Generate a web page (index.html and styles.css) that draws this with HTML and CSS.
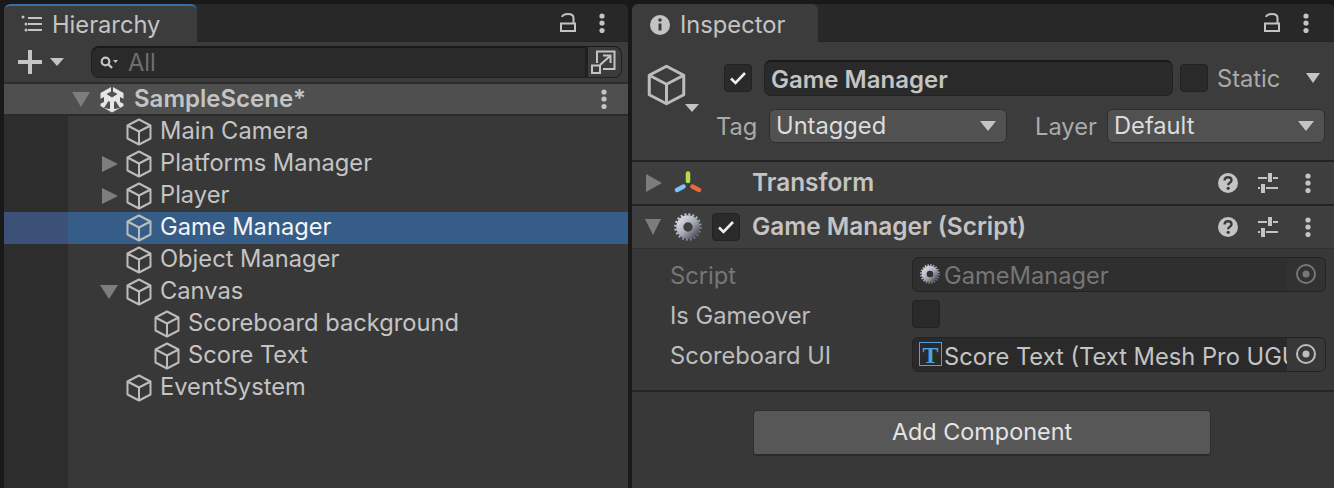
FILE: index.html
```html
<!DOCTYPE html>
<html>
<head>
    <title>Unity Editor</title>
    <meta http-equiv="Content-Type" content="text/html; charset=utf-8"/>
    <link rel="stylesheet" href="styles.css">
</head>
<body>
<svg class="defs" width="0" height="0">
    <symbol id="cube" viewBox="0 0 26 28">
        <path d="M13 1.500 24.500 7.500V20.500L13 26.500 1.500 20.500V7.500ZM1.500 7.500 13 13.500 24.500 7.500M13 13.500V26.500" fill="none" stroke="currentColor" stroke-width="2" stroke-linejoin="round"/>
    </symbol>
    <symbol id="dots" viewBox="0 0 6 20">
        <circle cx="3" cy="3" r="2.600" fill="currentColor"/><circle cx="3" cy="10" r="2.600" fill="currentColor"/><circle cx="3" cy="17.500" r="2.600" fill="currentColor"/>
    </symbol>
    <symbol id="lock" viewBox="0 0 16 19">
        <path d="M1 10.500H15V18H1ZM2 4Q3 1 8 1 13.500 1 13.500 5V10" fill="none" stroke="currentColor" stroke-width="2"/>
    </symbol>
    <symbol id="help" viewBox="0 0 20 20">
        <circle cx="10" cy="10" r="10" fill="#c4c4c4"/>
        <path d="M6.500 7.500Q6.800 4.300 10 4.300 13.500 4.300 13.500 7.200 13.500 8.700 11.800 9.700 10.200 10.600 10.200 12.200" fill="none" stroke="#3c3c3c" stroke-width="2.400"/>
        <circle cx="10.200" cy="15.300" r="1.600" fill="#3c3c3c"/>
    </symbol>
    <symbol id="sliders" viewBox="0 0 20 20">
        <path d="M0 5H9M15 5H20M0 15H2M8 15H20" stroke="#c4c4c4" stroke-width="2" fill="none"/>
        <path d="M12 0V9M5 11V20" stroke="#c4c4c4" stroke-width="4" fill="none"/>
    </symbol>
    <symbol id="target" viewBox="0 0 20 20">
        <circle cx="10" cy="10" r="9" fill="none" stroke="currentColor" stroke-width="2"/><circle cx="10" cy="10" r="3.500" fill="currentColor"/>
    </symbol>
    <symbol id="gear" viewBox="0 0 30 30">
        <circle cx="15" cy="15" r="8.750" fill="none" stroke="url(#gearfill)" stroke-width="7.500"/>
        <circle cx="15" cy="15" r="13.500" fill="none" stroke="url(#gearfill)" stroke-width="2.500" stroke-dasharray="2.120 2.120"/>
    </symbol>
    <linearGradient id="gearfill" x1="0" y1="0" x2="1" y2="1">
        <stop offset="0" stop-color="#d8dbe2"/><stop offset="0.55" stop-color="#a4a8b4"/><stop offset="1" stop-color="#50545f"/>
    </linearGradient>
</svg>

<div class="editor">
    <div class="panel hierarchy">
        <div class="tabbar">
            <div class="tab tab-active">
                <svg class="tab-icon" width="22" height="18" viewBox="0 0 22 18"><path d="M7 3H21M7 9H21M7 15H21" stroke="#c4c4c4" stroke-width="2"/><circle cx="2" cy="2" r="1.500" fill="#c4c4c4"/><circle cx="5" cy="9" r="1.500" fill="#c4c4c4"/><circle cx="5" cy="15" r="1.500" fill="#c4c4c4"/></svg>
                <span>Hierarchy</span>
            </div>
            <div class="tab-tools">
                <svg class="lock"><use href="#lock"/></svg>
                <svg class="dots"><use href="#dots"/></svg>
            </div>
        </div>
        <div class="toolbar">
            <svg class="plus" width="24" height="24" viewBox="0 0 24 24"><path d="M12 0V24M0 12H24" stroke="#c4c4c4" stroke-width="4"/></svg>
            <i class="arrow-down small"></i>
            <div class="search">
                <svg class="search-icon" width="18" height="14" viewBox="0 0 18 14"><circle cx="5.500" cy="5.500" r="3.800" fill="none" stroke="#c4c4c4" stroke-width="2.200"/><path d="M8 8 12 12" stroke="#c4c4c4" stroke-width="2.400"/><path d="M13 4H18L15.500 7Z" fill="#c4c4c4"/></svg>
                <span class="search-text">All</span>
                <div class="search-btn">
                    <svg width="28" height="24" viewBox="0 0 28 24"><path d="M6 13V1.500H23.500V19H12" fill="none" stroke="#c4c4c4" stroke-width="2"/><path d="M1 15.500H9V23H1Z" fill="none" stroke="#c4c4c4" stroke-width="2"/><path d="M9 15 19 6M12 5.500H19.500V13" fill="none" stroke="#c4c4c4" stroke-width="2"/></svg>
                </div>
            </div>
        </div>
        <div class="scene">
            <i class="arrow-down scene-arrow"></i>
            <svg class="scene-icon" width="24" height="27" viewBox="0 0 24 27">
                <path d="M12 0.500 23.500 7V20L12 26.500 0.500 20V7Z" fill="#e6e6e6"/>
                <path d="M12 0V6" stroke="#505050" stroke-width="2"/>
                <path d="M6.500 8 12 5 17.500 8 12 11.500Z" fill="#505050"/>
                <path d="M4 22 8.500 15 10 16V23ZM20 22 15.500 15 14 16V23Z" fill="#505050"/>
                <path d="M0 13 4 11V16L0 18ZM24 13 20 11V16L24 18Z" fill="#505050"/>
            </svg>
            <span class="scene-name">SampleScene*</span>
            <svg class="dots scene-dots"><use href="#dots"/></svg>
        </div>
        <div class="tree">
            <div class="row"><i class="slot"></i><svg class="cube"><use href="#cube"/></svg><span>Main Camera</span></div>
            <div class="row"><i class="slot"><b class="fold-right"></b></i><svg class="cube"><use href="#cube"/></svg><span>Platforms Manager</span></div>
            <div class="row"><i class="slot"><b class="fold-right"></b></i><svg class="cube"><use href="#cube"/></svg><span>Player</span></div>
            <div class="row selected"><i class="slot"></i><svg class="cube"><use href="#cube"/></svg><span>Game Manager</span></div>
            <div class="row"><i class="slot"></i><svg class="cube"><use href="#cube"/></svg><span>Object Manager</span></div>
            <div class="row"><i class="slot"><b class="fold-down"></b></i><svg class="cube"><use href="#cube"/></svg><span>Canvas</span></div>
            <div class="row child"><i class="slot"></i><svg class="cube"><use href="#cube"/></svg><span>Scoreboard background</span></div>
            <div class="row child"><i class="slot"></i><svg class="cube"><use href="#cube"/></svg><span>Score Text</span></div>
            <div class="row"><i class="slot"></i><svg class="cube"><use href="#cube"/></svg><span>EventSystem</span></div>
        </div>
    </div>

    <div class="panel inspector">
        <div class="tabbar">
            <div class="tab tab-inspector">
                <svg class="tab-icon" width="20" height="20" viewBox="0 0 20 20"><circle cx="10" cy="10" r="10" fill="#c4c4c4"/><path d="M10 8.500V15.500" stroke="#3c3c3c" stroke-width="3"/><circle cx="10" cy="5" r="1.800" fill="#3c3c3c"/></svg>
                <span>Inspector</span>
            </div>
            <div class="tab-tools">
                <svg class="lock"><use href="#lock"/></svg>
                <svg class="dots"><use href="#dots"/></svg>
            </div>
        </div>

        <div class="go-header">
            <div class="go-icon">
                <svg class="go-cube"><use href="#cube"/></svg>
                <i class="arrow-down tiny"></i>
            </div>
            <div class="go-fields">
                <div class="go-line">
                    <div class="check on"><svg width="18" height="14" viewBox="0 0 18 14"><path d="M2 7.500 6.500 12 16 2" fill="none" stroke="#eee" stroke-width="2.600"/></svg></div>
                    <div class="name-field">Game Manager</div>
                    <div class="check"></div>
                    <span class="static-label">Static</span>
                    <i class="arrow-down static-arrow"></i>
                </div>
                <div class="go-line second">
                    <span class="tag-label">Tag</span>
                    <div class="dropdown tag-drop"><span>Untagged</span><i class="arrow-down"></i></div>
                    <span class="layer-label">Layer</span>
                    <div class="dropdown layer-drop"><span>Default</span><i class="arrow-down"></i></div>
                </div>
            </div>
        </div>

        <div class="comp-head">
            <b class="fold-right comp-fold"></b>
            <svg class="axis" width="28" height="24" viewBox="0 0 28 24">
                <path d="M14 2.500V10" stroke="#b0e04a" stroke-width="4.500" stroke-linecap="round"/>
                <path d="M9.500 15.500 3 19" stroke="#7cc4f5" stroke-width="4.500" stroke-linecap="round"/>
                <path d="M18.500 15.500 25 19" stroke="#e8693a" stroke-width="4.500" stroke-linecap="round"/>
            </svg>
            <span class="comp-title">Transform</span>
            <div class="comp-tools">
                <svg><use href="#help"/></svg>
                <svg><use href="#sliders"/></svg>
                <svg class="dots"><use href="#dots"/></svg>
            </div>
        </div>

        <div class="comp-head second-comp">
            <b class="fold-down comp-fold"></b>
            <svg class="gear" width="28" height="28"><use href="#gear"/></svg>
            <div class="check on comp-check"><svg width="18" height="14" viewBox="0 0 18 14"><path d="M2 7.500 6.500 12 16 2" fill="none" stroke="#eee" stroke-width="2.600"/></svg></div>
            <span class="comp-title">Game Manager (Script)</span>
            <div class="comp-tools">
                <svg><use href="#help"/></svg>
                <svg><use href="#sliders"/></svg>
                <svg class="dots"><use href="#dots"/></svg>
            </div>
        </div>

        <div class="props">
            <div class="prop disabled">
                <span class="prop-label">Script</span>
                <div class="obj-field">
                    <svg class="gear-small" width="20" height="20"><use href="#gear"/></svg>
                    <span class="obj-text">GameManager</span>
                    <div class="obj-pick"><svg width="20" height="20"><use href="#target"/></svg></div>
                </div>
            </div>
            <div class="prop">
                <span class="prop-label">Is Gameover</span>
                <div class="check"></div>
            </div>
            <div class="prop">
                <span class="prop-label">Scoreboard UI</span>
                <div class="obj-field">
                    <div class="tmp-icon">T</div>
                    <span class="obj-text">Score Text (Text Mesh Pro UGUI)</span>
                    <div class="obj-pick"><svg width="20" height="20"><use href="#target"/></svg></div>
                </div>
            </div>
        </div>

        <div class="add-area">
            <div class="add-btn">Add Component</div>
        </div>
    </div>
</div>
</body>
</html>
```

FILE: styles.css
```css
html, body {
    margin: 0;
    padding: 0;
    height: 488px;
    overflow: hidden;
    background-color: #191919;
    font-family: Inter, "Liberation Sans", sans-serif;
    font-size: 23.7px;
    color: #c4c4c4;
}

.defs {
    position: absolute;
}

.editor {
    display: flex;
    gap: 4px;
    height: 484px;
    padding: 4px 0 0 4px;
}

.panel {
    display: flex;
    flex-direction: column;
    border-radius: 6px 6px 0 0;
    background-color: #383838;
    overflow: hidden;
}

.hierarchy {
    width: 624px;
}

.inspector {
    width: 702px;
}

/**** TABS ****/

.tabbar {
    display: flex;
    height: 38px;
    background-color: #282828;
    border-bottom: 1px solid #232323;
    box-sizing: border-box;
    flex: none;
}

.tab {
    display: flex;
    align-items: center;
    height: 38px;
    background-color: #3c3c3c;
    border-radius: 6px 6px 0 0;
    box-sizing: border-box;
}

.tab-active {
    width: 193px;
    border-top: 2px solid #3a6ea5;
    padding-left: 17px;
    gap: 9px;
}

.tab-inspector {
    width: 186px;
    padding-left: 18px;
    padding-top: 3px;
    gap: 10px;
}

.tab-icon {
    flex: none;
}

.tab-tools {
    display: flex;
    align-items: center;
    gap: 23px;
    margin-left: auto;
    padding-right: 23px;
    height: 37px;
}

.inspector .tab-tools {
    padding-right: 25px;
}

.lock {
    width: 16px;
    height: 19px;
    color: #c4c4c4;
}

.dots {
    width: 6px;
    height: 20px;
    color: #c4c4c4;
}

/**** HIERARCHY ****/

.toolbar {
    display: flex;
    align-items: center;
    height: 42px;
    background-color: #3c3c3c;
    border-bottom: 2px solid #2c2c2c;
    padding-left: 14px;
    box-sizing: border-box;
    flex: none;
}

.arrow-down {
    display: block;
    width: 0;
    height: 0;
    border-left: 8px solid transparent;
    border-right: 8px solid transparent;
    border-top: 10px solid #c4c4c4;
    flex: none;
}

.arrow-down.small {
    margin: 0 0 0 8px;
    border-left-width: 7px;
    border-right-width: 7px;
    border-top-width: 8px;
}

.search {
    display: flex;
    align-items: center;
    flex: 1;
    height: 32px;
    margin: 0 6px 0 27px;
    background-color: #2a2a2a;
    border: 1px solid #212121;
    border-top: 2px solid #191919;
    border-radius: 8px;
    box-sizing: border-box;
    padding-left: 8px;
}

.search-text {
    margin-left: 10px;
    color: #6f6f6f;
}

.search-btn {
    display: flex;
    align-items: center;
    justify-content: center;
    margin-left: auto;
    width: 36px;
    height: 30px;
    margin-top: -1px;
    background-color: #3c3c3c;
    border-left: 3px solid #212121;
    box-sizing: border-box;
    border-radius: 0 7px 7px 0;
}

.scene {
    display: flex;
    align-items: center;
    height: 30px;
    background-color: #4f4f4f;
    border-bottom: 2px solid #2a2a2a;
    box-sizing: content-box;
    padding-left: 68px;
    flex: none;
    font-size: 24px;
    font-weight: 600;
}

.scene-arrow {
    border-top: 15px solid #7d7d7d;
    border-left-width: 9px;
    border-right-width: 9px;
}

.scene-icon {
    margin-left: 10px;
}

.scene-name {
    margin-left: 10px;
    padding-bottom: 2px;
}

.scene-dots {
    margin-left: auto;
    margin-right: 21px;
}

.tree {
    flex: 1;
    background: linear-gradient(to right, #2d2d2d 64px, #383838 64px);
}

.row {
    display: flex;
    align-items: center;
    height: 32px;
    padding-left: 96px;
    box-sizing: border-box;
}

.row span {
    margin-left: 8px;
    padding-bottom: 4px;
}

.row.child {
    padding-left: 124px;
}

.row.selected {
    background: linear-gradient(to right, #3c5078 64px, #365d88 64px);
    color: #f4f4f4;
}

.slot {
    display: flex;
    align-items: center;
    width: 22px;
    height: 32px;
    padding-left: 2px;
    margin-right: 2px;
    flex: none;
}

.slot .fold-down {
    margin-left: -2px;
}

.cube {
    width: 26px;
    height: 28px;
    color: #bcbcbc;
    flex: none;
}

.fold-right {
    display: block;
    width: 0;
    height: 0;
    border-top: 8px solid transparent;
    border-bottom: 8px solid transparent;
    border-left: 16px solid #7d7d7d;
}

.fold-down {
    display: block;
    width: 0;
    height: 0;
    border-left: 9px solid transparent;
    border-right: 9px solid transparent;
    border-top: 14px solid #7d7d7d;
}

/**** INSPECTOR ****/

.go-header {
    display: flex;
    height: 118px;
    background-color: #3c3c3c;
    border-bottom: 2px solid #232323;
    box-sizing: content-box;
    flex: none;
}

.go-icon {
    position: relative;
    width: 92px;
    flex: none;
}

.go-cube {
    position: absolute;
    left: 15px;
    top: 22px;
    width: 39px;
    height: 42px;
    color: #bcbcbc;
}

.arrow-down.tiny {
    position: absolute;
    left: 53px;
    top: 62px;
    border-left-width: 7px;
    border-right-width: 7px;
    border-top-width: 8px;
}

.go-fields {
    flex: 1;
}

.go-line {
    display: flex;
    align-items: center;
    height: 34px;
    margin-top: 19px;
}

.go-line.second {
    margin-top: 14px;
    height: 34px;
}

.check {
    display: flex;
    align-items: center;
    justify-content: center;
    width: 28px;
    height: 28px;
    background-color: #2a2a2a;
    border: 1px solid #222;
    border-radius: 4px;
    box-sizing: border-box;
    flex: none;
}

.name-field {
    width: 409px;
    height: 36px;
    line-height: 35px;
    margin: 0 7px 0 12px;
    padding-left: 6px;
    background-color: #2a2a2a;
    border: 1px solid #222;
    border-top: 2px solid #191919;
    border-radius: 7px;
    box-sizing: border-box;
    font-size: 24px;
    font-weight: 600;
    flex: none;
}

.static-label {
    margin-left: 9px;
    color: #aaa;
}

.static-arrow {
    margin-left: 26px;
    border-left-width: 7px;
    border-right-width: 7px;
}

.tag-label {
    margin-left: -8px;
    width: 53px;
    flex: none;
    color: #aaa;
}

.dropdown {
    display: flex;
    align-items: center;
    justify-content: space-between;
    height: 34px;
    padding: 0 10px 0 6px;
    background-color: #515151;
    border: 1px solid #2f2f2f;
    border-radius: 6px;
    box-sizing: border-box;
    color: #dcdcdc;
}

.dropdown span {
    padding-bottom: 2px;
}

.tag-drop {
    width: 238px;
}

.layer-label {
    margin-left: 28px;
    width: 72px;
    flex: none;
    color: #aaa;
}

.layer-drop {
    width: 218px;
}

.comp-head {
    position: relative;
    display: flex;
    align-items: center;
    height: 42px;
    padding-left: 14px;
    background-color: #3e3e3e;
    border-bottom: 2px solid #232323;
    box-sizing: content-box;
    font-weight: 600;
    flex: none;
}

.second-comp {
    border-bottom: 1px solid #303030;
}

.comp-head .fold-right {
    border-top-width: 9px;
    border-bottom-width: 9px;
}

.comp-head .fold-down {
    margin-left: -1px;
    border-left-width: 8.500px;
    border-right-width: 8.500px;
    border-top-width: 16px;
}

.axis {
    margin-left: 12px;
}

.comp-title {
    position: absolute;
    left: 120px;
    padding-bottom: 2px;
    font-size: 24.400px;
}

.gear {
    margin-left: 13px;
}

.comp-check {
    margin-left: 10px;
}

.comp-tools {
    display: flex;
    align-items: center;
    gap: 20px;
    margin-left: auto;
    padding-right: 23px;
}

.comp-tools svg {
    width: 20px;
    height: 20px;
}

.comp-tools .dots {
    width: 6px;
    margin-left: 7px;
}

.props {
    padding: 5px 0 0;
    height: 143px;
    border-bottom: 2px solid #252525;
    flex: none;
    box-sizing: border-box;
    background-color: #383838;
}

.prop {
    display: flex;
    align-items: center;
    height: 40px;
    padding-left: 38px;
}

.prop-label {
    width: 242px;
    padding-top: 2px;
    flex: none;
    color: #bdbdbd;
}

.disabled .prop-label,
.disabled .obj-text {
    color: #767676;
}

.disabled .obj-field {
    background-color: #2f2f2f;
}

.obj-field {
    display: flex;
    align-items: center;
    width: 414px;
    height: 35px;
    background-color: #2a2a2a;
    border: 1px solid #232323;
    border-radius: 6px;
    box-sizing: border-box;
    padding-left: 6px;
    overflow: hidden;
}

.gear-small {
    flex: none;
    margin: 0 4px 0 1px;
}

.obj-text {
    flex: 1;
    padding-top: 2px;
    white-space: nowrap;
    overflow: hidden;
    color: #c4c4c4;
}

.tmp-icon + .obj-text {
    padding-top: 4px;
}

.obj-pick {
    display: flex;
    align-items: center;
    justify-content: center;
    align-self: stretch;
    width: 38px;
    color: #bdbdbd;
    background-color: #383838;
    flex: none;
}

.disabled .obj-pick {
    color: #767676;
    background-color: #323232;
}

.tmp-icon {
    width: 23px;
    height: 24px;
    line-height: 24px;
    margin-right: 2px;
    border: 1px solid #4aa3e0;
    box-sizing: border-box;
    text-align: center;
    font-family: "Liberation Serif", serif;
    font-weight: bold;
    font-size: 24px;
    color: #4aa3e0;
    flex: none;
}

.add-area {
    display: flex;
    justify-content: center;
    padding: 18px 2px 0 0;
    flex: 1;
    background-color: #383838;
}

.add-btn {
    width: 458px;
    height: 46px;
    line-height: 42px;
    text-align: center;
    background-color: #575757;
    border: 1px solid #2e2e2e;
    border-bottom: 2px solid #2a2a2a;
    border-radius: 4px;
    box-sizing: border-box;
    font-size: 23.400px;
    color: #e4e4e4;
}
```
